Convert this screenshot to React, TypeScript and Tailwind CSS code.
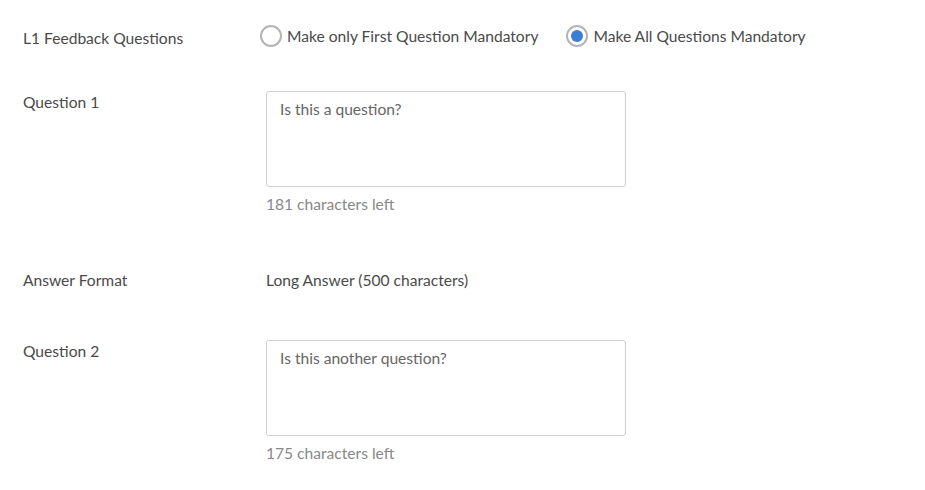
import React from "react";

function Radio({ checked, label }: { checked?: boolean; label: string }) {
  return (
    <div className="flex items-center gap-[5px]">
      <span className="flex h-[22px] w-[22px] items-center justify-center rounded-full border-2 border-[#b5b5b5] bg-white">
        {checked && <span className="h-[12px] w-[12px] rounded-full bg-[#3a7fd5]" />}
      </span>
      <span className="text-[#4a4a4a]">{label}</span>
    </div>
  );
}

function TextBox({ text, left }: { text: string; left: string }) {
  return (
    <div className="flex flex-col">
      <div className="h-[96px] w-[360px] rounded-[3px] border border-[#cfcfcf] bg-white px-[13px] pt-[6px] text-[#666666]">
        {text}
      </div>
      <div className="mt-[6px] text-[#888888]">{left}</div>
    </div>
  );
}

export default function App() {
  return (
    <div
      className="min-h-[490px] w-[925px] bg-white pl-[23px] pt-[27px] text-[15.6px] leading-[22px] text-[#4a4a4a]"
      style={{ fontFamily: "Lato, 'Open Sans', sans-serif" }}
    >
      <div className="flex">
        <div className="w-[237px]">L1 Feedback Questions</div>
        <div className="-mt-[5px] flex gap-[28px]">
          <Radio label="Make only First Question Mandatory" />
          <Radio checked label="Make All Questions Mandatory" />
        </div>
      </div>

      <div className="mt-[42px] flex">
        <div className="w-[243px]">Question 1</div>
        <TextBox text="Is this a question?" left="181 characters left" />
      </div>

      <div className="mt-[54px] flex">
        <div className="w-[243px]">Answer Format</div>
        <div>Long Answer (500 characters)</div>
      </div>

      <div className="mt-[49px] flex">
        <div className="w-[243px]">Question 2</div>
        <TextBox text="Is this another question?" left="175 characters left" />
      </div>
    </div>
  );
}
